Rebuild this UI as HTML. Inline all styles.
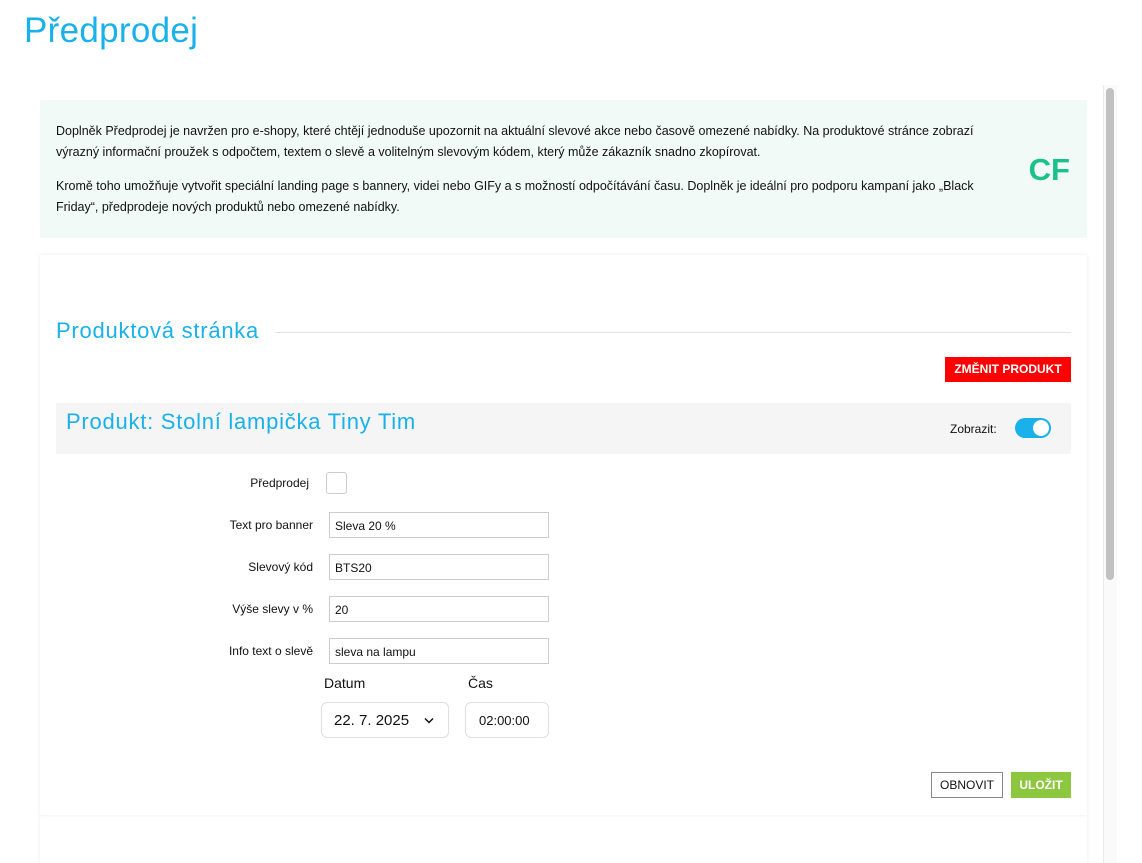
<!DOCTYPE html>
<html><head><meta charset="utf-8"><style>
*{box-sizing:border-box;margin:0;padding:0}
html,body{width:1142px;height:863px;overflow:hidden}
body{background:#fff;font-family:"Liberation Sans",sans-serif;color:#111;position:relative}
.abs{position:absolute}
h1{position:absolute;left:24px;top:11px;font-size:35px;font-weight:400;color:#1ab0ea;letter-spacing:0.3px}
.info{left:40px;top:100px;width:1047px;height:138px;background:#f2faf8}
.info p{position:absolute;left:16px;width:930px;font-size:12.5px;line-height:21px;color:#111}
.cf{right:17px;top:52px;font-size:31px;font-weight:700;color:#1cc08a}
.card{left:40px;top:255px;width:1047px;height:560px;background:#fff;box-shadow:0 0 4px rgba(0,0,0,0.08)}
.card2{left:40px;top:815px;width:1047px;height:48px;background:#fff;box-shadow:0 0 4px rgba(0,0,0,0.08)}
.sb{left:1103px;top:85px;width:14px;height:778px;background:#fafafa;border-left:1px solid #e8e8e8}
.thumb{left:1106px;top:88px;width:8px;height:492px;background:#c1c1c1;border-radius:4px}
.lbl{font-size:12px;text-align:right;width:120px}
.inp{width:220px;height:26px;border:1px solid #ccc;font-size:12px;padding:6px 5px}
</style></head><body>
<h1>Předprodej</h1>
<div class="abs info">
<p style="top:21px">Doplněk Předprodej je navržen pro e-shopy, které chtějí jednoduše upozornit na aktuální slevové akce nebo časově omezené nabídky. Na produktové stránce zobrazí výrazný informační proužek s odpočtem, textem o slevě a volitelným slevovým kódem, který může zákazník snadno zkopírovat.</p>
<p style="top:76px">Kromě toho umožňuje vytvořit speciální landing page s bannery, videi nebo GIFy a s možností odpočítávání času. Doplněk je ideální pro podporu kampaní jako „Black Friday“, předprodeje nových produktů nebo omezené nabídky.</p>
<div class="abs cf">CF</div>
</div>
<div class="abs card2"></div>
<div class="abs card"></div>
<div class="abs" style="left:56px;top:318px;font-size:22px;color:#1ab0ea;letter-spacing:0.75px">Produktová stránka</div>
<div class="abs" style="left:275px;top:332px;width:796px;height:1px;background:#e3e3e3"></div>
<div class="abs" style="left:945px;top:357px;width:126px;height:25px;background:#f00;color:#fff;font-size:12px;font-weight:700;text-align:center;line-height:25px">ZMĚNIT PRODUKT</div>
<div class="abs" style="left:56px;top:403px;width:1015px;height:51px;background:#f5f5f5"></div>
<div class="abs" style="left:66px;top:409px;font-size:22px;color:#1ab0ea;letter-spacing:0.75px">Produkt: Stolní lampička Tiny Tim</div>
<div class="abs" style="left:950px;top:422px;font-size:12px">Zobrazit:</div>
<div class="abs" style="left:1015px;top:418px;width:36px;height:20px;border-radius:10px;background:#1ab0ea"><div class="abs" style="right:2px;top:2px;width:16px;height:16px;border-radius:50%;background:#fff"></div></div>
<div class="abs lbl" style="left:189px;top:476px">Předprodej</div>
<div class="abs" style="left:326px;top:472px;width:21px;height:22px;border:1px solid #ccc;border-radius:3px"></div>
<div class="abs lbl" style="left:193px;top:518px">Text pro banner</div>
<div class="abs inp" style="left:329px;top:512px">Sleva 20 %</div>
<div class="abs lbl" style="left:193px;top:560px">Slevový kód</div>
<div class="abs inp" style="left:329px;top:554px">BTS20</div>
<div class="abs lbl" style="left:193px;top:602px">Výše slevy v %</div>
<div class="abs inp" style="left:329px;top:596px">20</div>
<div class="abs lbl" style="left:193px;top:644px">Info text o slevě</div>
<div class="abs inp" style="left:329px;top:638px">sleva na lampu</div>
<div class="abs" style="left:324px;top:675px;font-size:14px">Datum</div>
<div class="abs" style="left:468px;top:675px;font-size:14px">Čas</div>
<div class="abs" style="left:321px;top:702px;width:128px;height:36px;border:1px solid #dde;border-radius:6px;font-size:15px;padding:9px 12px">22. 7. 2025 <svg style="position:absolute;right:14px;top:14px" width="10" height="7" viewBox="0 0 10 7"><path d="M1 1.5L5 5.5L9 1.5" fill="none" stroke="#111" stroke-width="1.5"/></svg></div>
<div class="abs" style="left:465px;top:702px;width:84px;height:36px;border:1px solid #dde;border-radius:6px;font-size:13px;padding:10px 13px">02:00:00</div>
<div class="abs" style="left:931px;top:772px;width:72px;height:26px;border:1px solid #888;font-size:12px;text-align:center;line-height:24px">OBNOVIT</div>
<div class="abs" style="left:1011px;top:772px;width:60px;height:26px;background:#8dc63f;color:#fff;font-size:12px;font-weight:700;text-align:center;line-height:26px">ULOŽIT</div>
<div class="abs sb"></div><div class="abs thumb"></div>
</body></html>
